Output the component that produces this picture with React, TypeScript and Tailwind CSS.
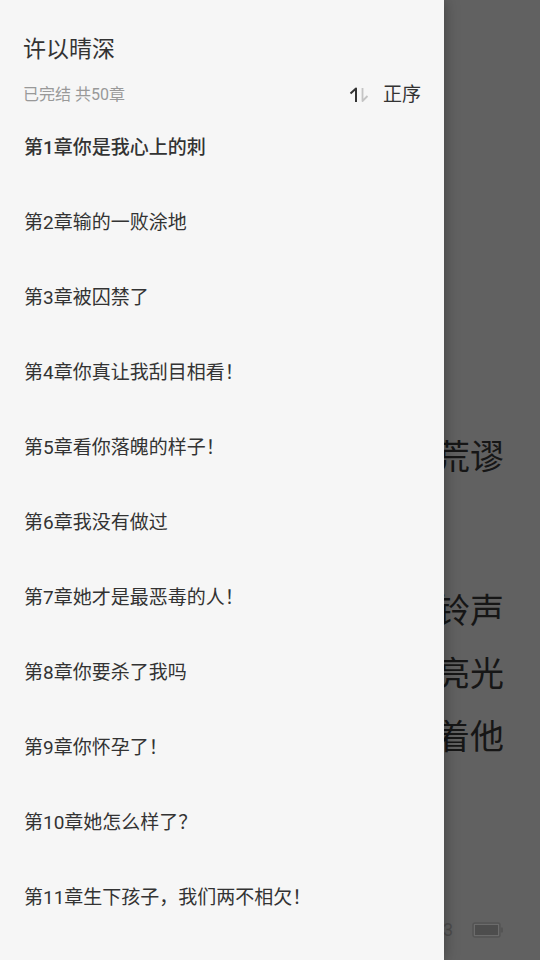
const chapters = [
  "第1章你是我心上的刺",
  "第2章输的一败涂地",
  "第3章被囚禁了",
  "第4章你真让我刮目相看！",
  "第5章看你落魄的样子！",
  "第6章我没有做过",
  "第7章她才是最恶毒的人！",
  "第8章你要杀了我吗",
  "第9章你怀孕了！",
  "第10章她怎么样了？",
  "第11章生下孩子，我们两不相欠！",
];

const SortIcon = () => (
  <svg width="20" height="18" viewBox="0 0 20 18" fill="none" aria-hidden="true">
    <path d="M1.5 7.5 7 2.5v13.5" stroke="#333" strokeWidth="2" strokeLinejoin="round" />
    <path d="M13.5 2v13l5-5" stroke="#c4c4c4" strokeWidth="1.8" strokeLinejoin="round" />
  </svg>
);

const BatteryIcon = () => (
  <svg width="32" height="16" viewBox="0 0 32 16" fill="none" aria-hidden="true">
    <rect x="1" y="1" width="27" height="14" rx="2" stroke="#545454" strokeWidth="1.4" />
    <rect x="2.5" y="2.5" width="24" height="11" fill="#4d4d4d" stroke="#6b6b6b" />
    <path d="M28.5 5.5h1.5q1 0 1 1v3q0 1-1 1h-1.5z" fill="#545454" />
  </svg>
);

const ReaderPage = () => (
  <main className="flex min-h-screen flex-col items-end bg-[#616161] pr-9 text-[34px] leading-[63px] text-[#161616]">
    <p className="mt-[426px]">荒谬</p>
    <div className="mt-[91px]">
      <p>铃声</p>
      <p>亮光</p>
      <p>着他</p>
    </div>
    <footer className="mt-auto mb-5 flex items-center gap-[19px] text-lg leading-5 text-[#4d4d4d]">
      <span>3</span>
      <BatteryIcon />
    </footer>
  </main>
);

const ChapterDrawer = () => (
  <aside className="absolute inset-y-0 left-0 right-24 overflow-hidden bg-[#f6f6f6] pt-5 text-[#333] shadow-[0_0_14px_rgba(0,0,0,0.35)]">
    <header className="px-[23px]">
      <h1 className="text-[23px] leading-[59px]">许以晴深</h1>
      <div className="flex h-8 items-center justify-between">
        <span className="text-base text-[#999]">已完结 共50章</span>
        <button type="button" className="flex items-center gap-[14px] text-[19px]">
          <SortIcon />
          正序
        </button>
      </div>
    </header>
    <ul className="px-6">
      {chapters.map((title, index) => (
        <li key={title}>
          <button
            type="button"
            className={`block h-[75px] w-full text-left text-[19px] ${index === 0 ? "font-medium" : ""}`}
          >
            {title}
          </button>
        </li>
      ))}
    </ul>
  </aside>
);

export default function App() {
  return (
    <div
      lang="zh-CN"
      className="relative min-h-screen overflow-hidden font-[Roboto,'Noto_Sans_CJK_SC',sans-serif]"
    >
      <ReaderPage />
      <ChapterDrawer />
    </div>
  );
}
